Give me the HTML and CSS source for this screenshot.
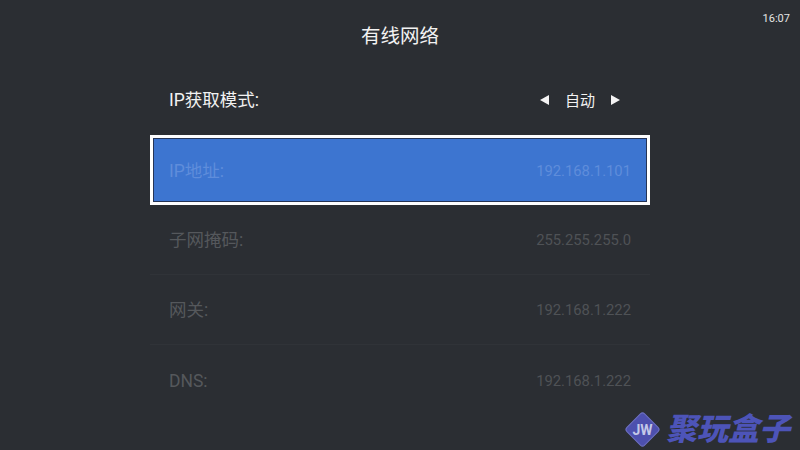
FILE: index.html
```html
<!DOCTYPE html>
<html lang="zh-CN">
<head>
    <meta charset="UTF-8">
    <title>有线网络</title>
    <link rel="stylesheet" href="styles.css">
</head>
<body>
    <div class="screen">
        <div class="clock">16:07</div>
        <h1 class="title">有线网络</h1>
        <div class="list">
            <div class="row row-mode">
                <span class="label">IP获取模式:</span>
                <div class="picker">
                    <span class="arrow arrow-left"></span>
                    <span class="picker-value">自动</span>
                    <span class="arrow arrow-right"></span>
                </div>
            </div>
            <div class="row selected">
                <span class="label">IP地址:</span>
                <span class="value">192.168.1.101</span>
            </div>
            <div class="row">
                <span class="label">子网掩码:</span>
                <span class="value">255.255.255.0</span>
            </div>
            <div class="row">
                <span class="label">网关:</span>
                <span class="value">192.168.1.222</span>
            </div>
            <div class="row last">
                <span class="label">DNS:</span>
                <span class="value">192.168.1.222</span>
            </div>
        </div>
        <div class="watermark">
            <svg class="badge" width="37" height="37" viewBox="0 0 37 37">
                <rect x="6" y="6" width="25" height="25" rx="3" transform="rotate(45 18.5 18.5)" fill="#4d50ae" stroke="#6d70c4" stroke-width="1"/>
                <text class="badge-text" x="18.5" y="23.5" text-anchor="middle">JW</text>
            </svg>
            <span class="brand">聚玩盒子</span>
        </div>
    </div>
</body>
</html>
```

FILE: styles.css
```css
* {
    box-sizing: border-box;
}
html, body {
    margin: 0;
    padding: 0;
}
body {
    font-family: "Roboto", "Noto Sans CJK SC", sans-serif;
    background-color: #2b2e33;
    color: #f2f2f2;
}
.screen {
    position: relative;
    width: 800px;
    height: 450px;
    overflow: hidden;
    padding-top: 23px;
}
.clock {
    position: absolute;
    top: 12px;
    right: 10px;
    font-size: 11px;
    line-height: 13px;
    color: #e4e4e4;
}
.title {
    margin: 0 0 14px;
    height: 28px;
    font-size: 19.5px;
    line-height: 28px;
    font-weight: 400;
    text-align: center;
}
.list {
    width: 500px;
    margin: 0 auto;
}
.row {
    display: flex;
    justify-content: space-between;
    align-items: center;
    height: 70px;
    padding: 0 19px;
    border-bottom: 1px solid #303338;
}
.row .label {
    font-size: 17.5px;
    line-height: 24px;
    margin-top: 1px;
    color: #55585c;
}
.row .value {
    font-size: 14.8px;
    line-height: 20px;
    margin-top: 1px;
    color: #4f5256;
}
.row-mode {
    border-bottom: none;
    padding-right: 30px;
}
.row.row-mode .label {
    color: #f2f2f2;
    margin-top: -1px;
}
.picker {
    display: flex;
    align-items: center;
    width: 80px;
    justify-content: space-between;
    font-size: 15px;
    margin-top: -1px;
}
.arrow {
    width: 0;
    height: 0;
    border-top: 5px solid transparent;
    border-bottom: 5px solid transparent;
}
.arrow-left {
    border-right: 9px solid #f4f4f4;
}
.arrow-right {
    border-left: 9px solid #f4f4f4;
}
.selected {
    padding: 0 16px;
    background-color: #3d75d0;
    border: 3px solid #fff;
    box-shadow: inset 0 0 0 1px #253456;
}
.row.selected .label {
    color: #5f8ddb;
}
.row.selected .value {
    color: #5f8ddb;
}
.last {
    border-bottom: none;
}
.watermark {
    position: absolute;
    left: 624px;
    top: 411px;
    display: flex;
    align-items: center;
    gap: 5px;
}
.badge-text {
    font-size: 14px;
    font-weight: 700;
    fill: #c3c8e8;
}
.brand {
    font-size: 31px;
    line-height: 37px;
    font-weight: 900;
    font-style: italic;
    color: #4d54b8;
    white-space: nowrap;
}
```
